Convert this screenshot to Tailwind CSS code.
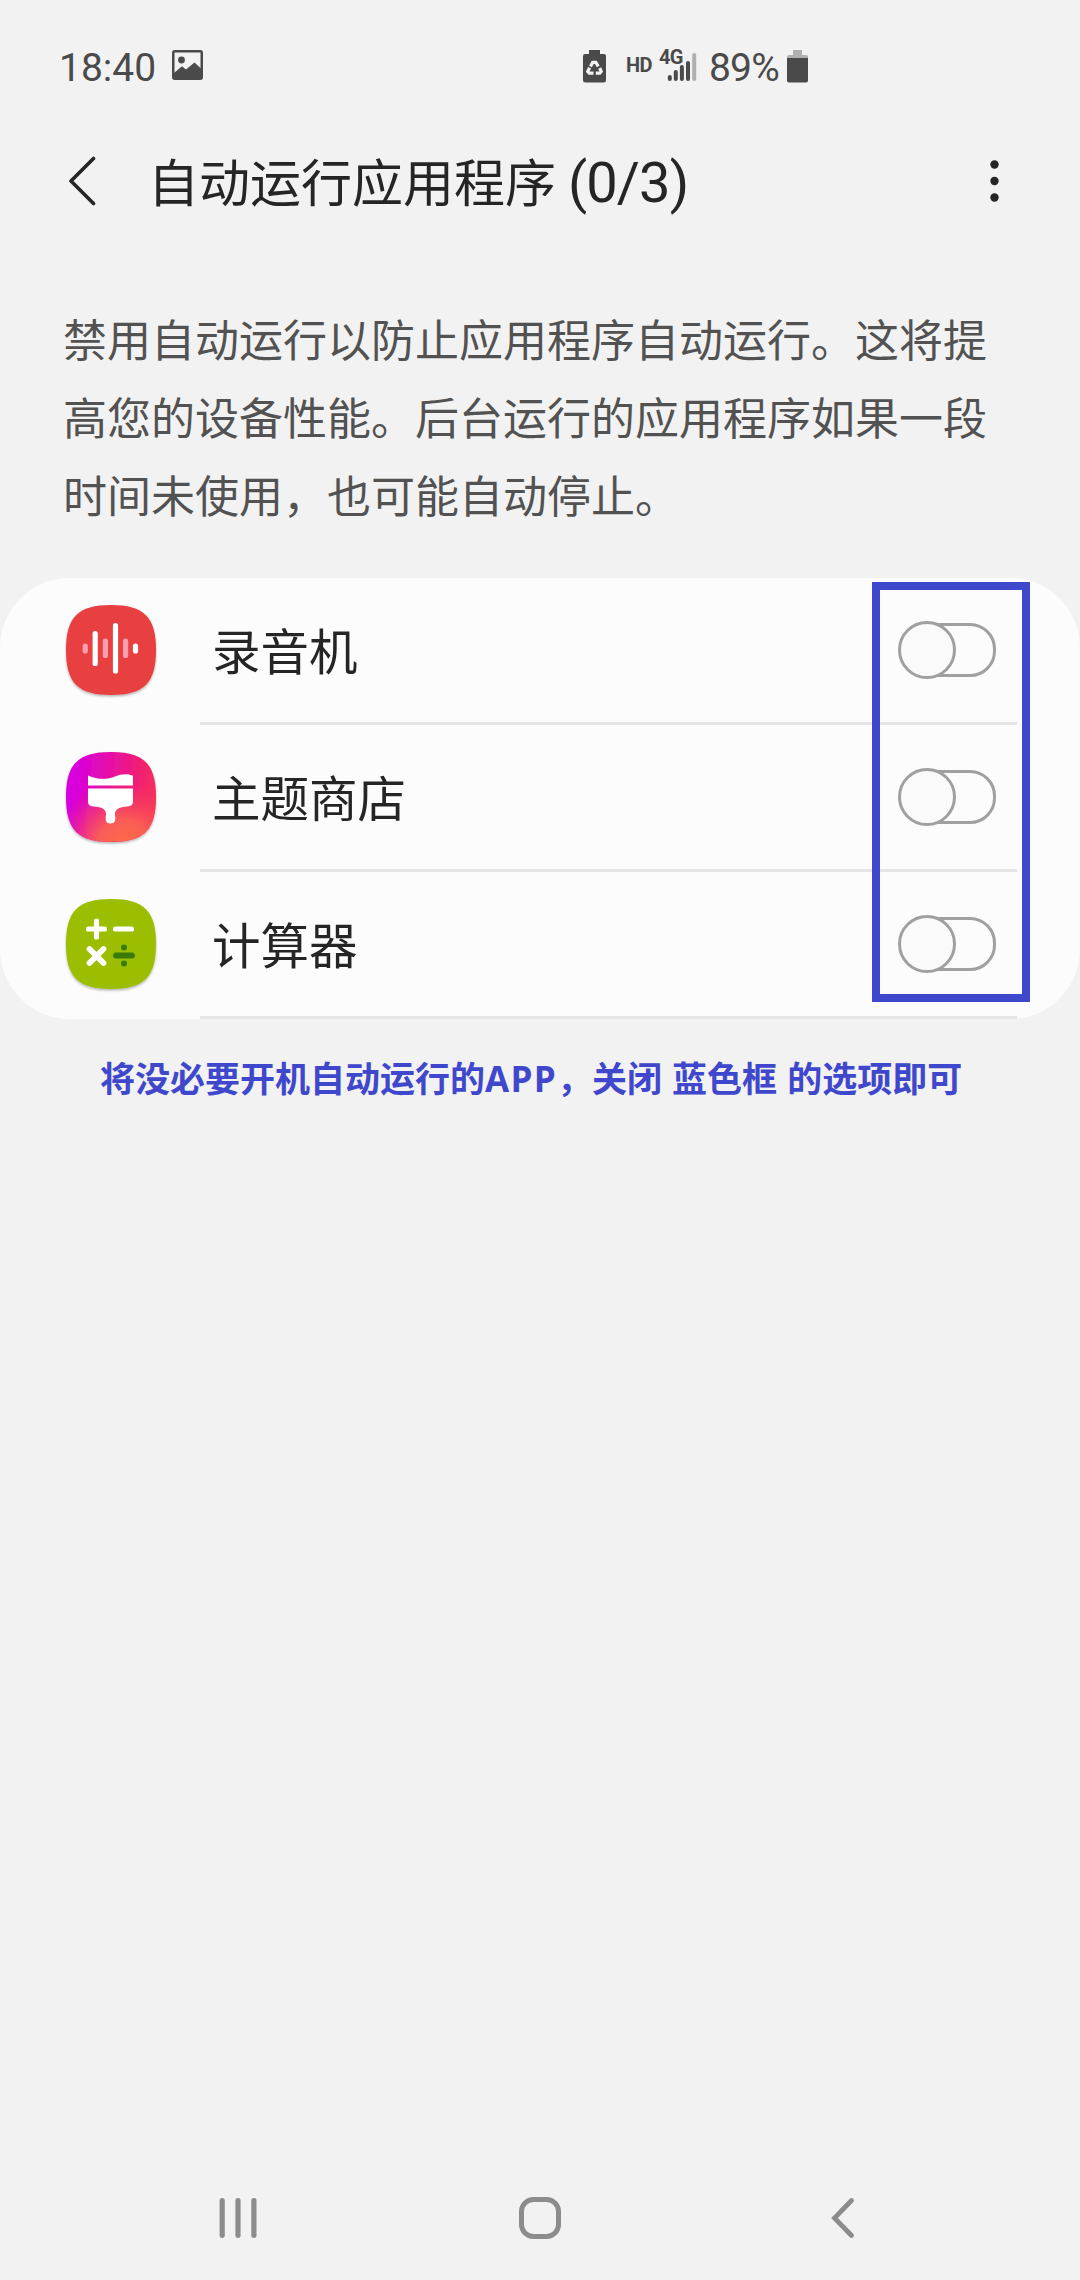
<!DOCTYPE html>
<html lang="zh-CN">
  <head>
    <meta charset="UTF-8" />
    <meta name="viewport" content="width=device-width, initial-scale=1.0" />
    <title>自动运行应用程序</title>
    <script src="https://cdn.jsdelivr.net/npm/@tailwindcss/browser@4"></script>
  </head>
  <body
    class="flex flex-col w-[1080px] h-[2280px] overflow-hidden bg-[#f2f2f2] text-[#252525] font-['Roboto','Noto_Sans_CJK_SC',sans-serif]"
  >
    <!-- Status bar -->
    <header
      class="flex items-center justify-between h-[134px] pl-[59px] pr-[272px] text-[#4a4a4a] text-[39px] leading-none"
    >
      <div class="flex items-center">
        <span class="w-[113px] pt-0.5">18:40</span>
        <svg class="w-[31px] h-[30px] -mt-1" viewBox="0 0 31 30">
          <rect x="1.25" y="1.25" width="28.5" height="27.5" rx="1.5" fill="none" stroke="#4a4a4a" stroke-width="2.5" />
          <circle cx="9.5" cy="10" r="3.4" fill="#4a4a4a" />
          <path d="M2 23 L10 16.2 L14 19.5 L22.5 12.5 L29 18.5 V28 H2Z" fill="#4a4a4a" />
        </svg>
      </div>
      <div class="flex items-center">
        <svg class="w-[23px] h-[33px] -mt-0.5" viewBox="0 0 23 33">
          <path d="M6 0h11v4h4a2 2 0 0 1 2 2v24a2.5 2.5 0 0 1-2.5 2.5h-18A2.5 2.5 0 0 1 0 30V6a2 2 0 0 1 2-2h4z" fill="#4a4a4a" />
          <g fill="none" stroke="#f2f2f2" stroke-width="3.2">
            <path d="M7.5 16.5 L9.7 12.3 H12.8 L15.3 16.3" />
            <path d="M16.7 18 L18.2 21.5 L16.8 23.2 H12.8" />
            <path d="M10.5 23.2 H6.2 L4.7 21.5 L6.6 17.8" />
          </g>
        </svg>
        <span class="ml-5 -mt-1 w-[34px] text-[20px] font-bold tracking-[-0.5px]">HD</span>
        <div class="relative w-[37px] h-[33px] -mt-0.5">
          <svg class="w-full h-full" viewBox="0 0 37 33">
            <g stroke="#4a4a4a" stroke-width="4" stroke-linecap="round">
              <path d="M9.8 27v2M15.8 22v7M21.9 17v12M28 13v16" />
              <path d="M34.2 5v24" stroke="#b0b0b0" />
            </g>
          </svg>
          <span class="absolute -left-px -top-0.5 text-[20px] font-bold leading-[18px] tracking-[-0.8px]">4G</span>
        </div>
        <span class="ml-3 w-[78px] pt-0.5 tracking-[-0.8px]">89%</span>
        <svg class="w-[21px] h-[33px] -mt-0.5" viewBox="0 0 21 33">
          <path d="M6 0h9v5h4a2 2 0 0 1 2 2v2H0V7a2 2 0 0 1 2-2h4z" fill="#b0b0b0" />
          <path d="M0 8h21v22.5a2 2 0 0 1-2 2H2a2 2 0 0 1-2-2z" fill="#4a4a4a" />
        </svg>
      </div>
    </header>

    <!-- Title bar -->
    <div class="flex items-center h-[94px] pl-[68px] pr-[80px]">
      <svg class="w-[28px] h-[50px]" viewBox="0 0 28 50">
        <path d="M25.500 2.500 L3 25 L25.500 47.500" fill="none" stroke="#252525" stroke-width="3.600" stroke-linecap="round" stroke-linejoin="round" />
      </svg>
      <h1 class="flex items-baseline ml-[52px] pt-[5px] grow whitespace-nowrap leading-[80px]">
        <span class="text-[51px]">自动运行应用程序</span>
        <span class="ml-[12px] text-[56px] tracking-[-0.9px]">(0/3)</span>
      </h1>
      <svg class="w-[11px] h-[44px]" viewBox="0 0 11 44" fill="#252525">
        <circle cx="5.500" cy="5.500" r="4.200" />
        <circle cx="5.500" cy="22" r="4.200" />
        <circle cx="5.500" cy="38.500" r="4.200" />
      </svg>
    </div>

    <p class="pt-[75px] pl-[63px] h-[350px] text-[44px] leading-[78px] text-[#525252] whitespace-nowrap">
      禁用自动运行以防止应用程序自动运行。这将提<br />
      高您的设备性能。后台运行的应用程序如果一段<br />
      时间未使用，也可能自动停止。
    </p>

    <!-- App list -->
    <div class="relative">
      <ul class="h-[441px] rounded-[70px] bg-[#fcfcfc] text-[48.500px] leading-[72px]">
        <li class="flex h-[147px] pl-[64px] pr-[63px]">
          <svg class="w-[94px] h-[98px] mt-[25px]" viewBox="0 0 94 98">
            <defs>
              <filter id="shadow" x="-10%" y="-10%" width="120%" height="125%">
                <feDropShadow dx="0" dy="1.500" stdDeviation="1" flood-color="#000" flood-opacity="0.3" />
              </filter>
            </defs>
            <path d="M47 2C80 2 92 14 92 47S80 92 47 92S2 80 2 47S14 2 47 2Z" fill="#e84040" filter="url(#shadow)" />
            <g stroke="#fff" stroke-width="5.200" stroke-linecap="round">
              <path d="M31.200 30.500v30M51.500 22.500v45.500M71.500 43v5" />
              <path d="M21.200 43v5M41.400 38v14.500M61.600 38v14.500" stroke="#ff9fae" />
            </g>
          </svg>
          <div class="flex items-center justify-between grow ml-[42px] pl-3 pr-[20px] border-b-3 border-[#e5e5e5]">
            <span class="pt-2">录音机</span>
            <svg class="w-[100px] h-[60px]" viewBox="0 0 100 60" stroke="#a0a0a0" stroke-width="3">
              <rect x="4" y="4.500" width="93.500" height="51" rx="24.500" fill="none" />
              <circle cx="30" cy="30" r="27.500" fill="#fafafa" />
            </svg>
          </div>
        </li>
        <li class="flex h-[147px] pl-[64px] pr-[63px]">
          <svg class="w-[94px] h-[98px] mt-[25px]" viewBox="0 0 94 98">
            <defs>
              <linearGradient id="theme" x1="0" y1="0.400" x2="1" y2="0.500">
                <stop offset="0.100" stop-color="#d800dc" />
                <stop offset="0.750" stop-color="#f01c78" />
                <stop offset="1" stop-color="#f5305c" />
              </linearGradient>
              <radialGradient id="glow" cx="0.640" cy="1.050" r="0.750">
                <stop offset="0" stop-color="#ff6a48" />
                <stop offset="0.400" stop-color="#fc6450" stop-opacity="0.900" />
                <stop offset="1" stop-color="#f83858" stop-opacity="0" />
              </radialGradient>
            </defs>
            <path d="M47 2C80 2 92 14 92 47S80 92 47 92S2 80 2 47S14 2 47 2Z" fill="url(#theme)" filter="url(#shadow)" />
            <path d="M47 2C80 2 92 14 92 47S80 92 47 92S2 80 2 47S14 2 47 2Z" fill="url(#glow)" />
            <g fill="#fff">
              <path d="M24 25.500C33 29.500 43 30 51 26.500C58 23.500 65 23.800 69 25.800V35.500H24Z" />
              <path d="M24 38.500H69V51C69 57 65 56 59 57C53 58 50.500 61 51 65C52 70 51 73.500 46.500 73.500S41 70 42 65C42.500 61 40 58 34 57C28 56 24 57 24 51Z" />
            </g>
          </svg>
          <div class="flex items-center justify-between grow ml-[42px] pl-3 pr-[20px] border-b-3 border-[#e5e5e5]">
            <span class="pt-2">主题商店</span>
            <svg class="w-[100px] h-[60px]" viewBox="0 0 100 60" stroke="#a0a0a0" stroke-width="3">
              <rect x="4" y="4.500" width="93.500" height="51" rx="24.500" fill="none" />
              <circle cx="30" cy="30" r="27.500" fill="#fafafa" />
            </svg>
          </div>
        </li>
        <li class="flex h-[147px] pl-[64px] pr-[63px]">
          <svg class="w-[94px] h-[98px] mt-[25px]" viewBox="0 0 94 98">
            <path d="M47 2C80 2 92 14 92 47S80 92 47 92S2 80 2 47S14 2 47 2Z" fill="#9bbe05" filter="url(#shadow)" />
            <g stroke="#fff" stroke-width="5.200" stroke-linecap="round">
              <path d="M24.500 32h16M32.500 24v16M51.500 32h16" />
              <path d="M25.500 52l14 14M39.500 52l-14 14" stroke-width="5.800" />
              <path d="M52 58.500h16" stroke="#3a7a08" stroke-width="5.800" />
            </g>
            <circle cx="60" cy="50.500" r="3" fill="#3a7a08" />
            <circle cx="60" cy="66.500" r="3" fill="#3a7a08" />
          </svg>
          <div class="flex items-center justify-between grow ml-[42px] pl-3 pr-[20px] border-b-3 border-[#e5e5e5]">
            <span class="pt-2">计算器</span>
            <svg class="w-[100px] h-[60px]" viewBox="0 0 100 60" stroke="#a0a0a0" stroke-width="3">
              <rect x="4" y="4.500" width="93.500" height="51" rx="24.500" fill="none" />
              <circle cx="30" cy="30" r="27.500" fill="#fafafa" />
            </svg>
          </div>
        </li>
      </ul>
      <!-- Highlight around the switches -->
      <div class="absolute left-[872px] top-1 w-[158px] h-[420px] border-8 border-[#3f48cc]"></div>
    </div>

    <p
      class="mt-[34px] pl-[100px] text-[35px] leading-[52px] font-bold text-[#3f48cc] whitespace-nowrap [word-spacing:1px] font-['Open_Sans','Noto_Sans_CJK_SC',sans-serif]"
    >将没必要开机自动运行的<span class="tracking-[1.3px]">APP</span>，关闭 蓝色框 的选项即可</p>

    <!-- Navigation bar -->
    <nav class="flex items-center justify-between mt-auto h-[124px] pl-[219px] pr-[225px]">
      <svg class="w-[38px] h-[42px]" viewBox="0 0 38 42">
        <path d="M3.200 3.700v34.600M19 3.700v34.600M34.900 3.700v34.600" stroke="#8c8c8c" stroke-width="5.200" stroke-linecap="round" />
      </svg>
      <svg class="w-[42px] h-[42px] mr-[8px]" viewBox="0 0 42 42">
        <rect x="2.500" y="2.500" width="37" height="37" rx="12" fill="none" stroke="#8c8c8c" stroke-width="5" />
      </svg>
      <svg class="w-[24px] h-[42px]" viewBox="0 0 24 42">
        <path d="M20.500 3.500L3.500 21L20.500 38.500" fill="none" stroke="#8c8c8c" stroke-width="4.800" stroke-linecap="round" />
      </svg>
    </nav>
  </body>
</html>
